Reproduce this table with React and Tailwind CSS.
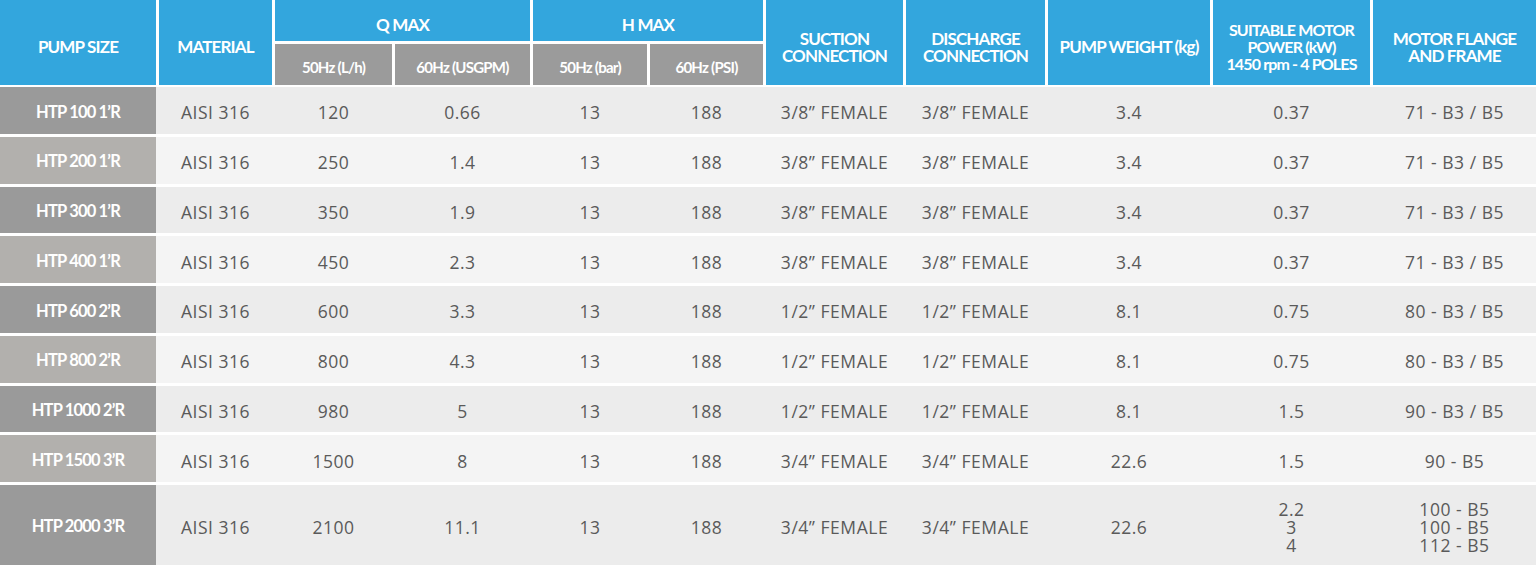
import React from "react";

const cols = "grid grid-cols-[156px_113px_117px_135px_114px_113px_137px_139px_162px_157px_163px] gap-x-[3px]";

const rows = [
  ["HTP 100 1’R", "120", "0.66", "3/8” FEMALE", "3.4", ["0.37"], ["71 - B3 / B5"]],
  ["HTP 200 1’R", "250", "1.4", "3/8” FEMALE", "3.4", ["0.37"], ["71 - B3 / B5"]],
  ["HTP 300 1’R", "350", "1.9", "3/8” FEMALE", "3.4", ["0.37"], ["71 - B3 / B5"]],
  ["HTP 400 1’R", "450", "2.3", "3/8” FEMALE", "3.4", ["0.37"], ["71 - B3 / B5"]],
  ["HTP 600 2’R", "600", "3.3", "1/2” FEMALE", "8.1", ["0.75"], ["80 - B3 / B5"]],
  ["HTP 800 2’R", "800", "4.3", "1/2” FEMALE", "8.1", ["0.75"], ["80 - B3 / B5"]],
  ["HTP 1000 2’R", "980", "5", "1/2” FEMALE", "8.1", ["1.5"], ["90 - B3 / B5"]],
  ["HTP 1500 3’R", "1500", "8", "3/4” FEMALE", "22.6", ["1.5"], ["90 - B5"]],
  ["HTP 2000 3’R", "2100", "11.1", "3/4” FEMALE", "22.6", ["2.2", "3", "4"], ["100 - B5", "100 - B5", "112 - B5"]],
];

const Head = ({ children, className = "" }) => (
  <div className={`bg-[#33a6dd] text-white flex items-center justify-center text-center pt-[8px] leading-[17px] ${className}`}>
    {children}
  </div>
);

const Sub = ({ children }) => (
  <div className="bg-[#9b9b9b] text-white flex items-center justify-center pt-[5px] text-[15px] tracking-[-0.05em]">
    {children}
  </div>
);

const Cell = ({ children }) => (
  <div className="flex flex-col items-center justify-center text-center pt-[4px] leading-[18px]">{children}</div>
);

export default function App() {
  return (
    <div className="w-[1536px] h-[568px] bg-white overflow-hidden">
      <div
        className={`${cols} grid-rows-[41px_41px] gap-y-[3px] text-[17px] font-bold tracking-[-0.05em]`}
        style={{ fontFamily: "Lato, 'Open Sans', sans-serif" }}
      >
        <Head className="row-span-2">PUMP SIZE</Head>
        <Head className="row-span-2">MATERIAL</Head>
        <Head className="col-span-2">Q MAX</Head>
        <Head className="col-span-2">H MAX</Head>
        <Head className="row-span-2">SUCTION<br />CONNECTION</Head>
        <Head className="row-span-2">DISCHARGE<br />CONNECTION</Head>
        <Head className="row-span-2">PUMP WEIGHT (kg)</Head>
        <Head className="row-span-2 leading-[15px] text-[16px]">SUITABLE MOTOR<br />POWER (kW)<br />1450 rpm - 4 POLES</Head>
        <Head className="row-span-2">MOTOR FLANGE<br />AND FRAME</Head>
        <Sub>50Hz (L/h)</Sub>
        <Sub>60Hz (USGPM)</Sub>
        <Sub>50Hz (bar)</Sub>
        <Sub>60Hz (PSI)</Sub>
      </div>

      <div className="mt-[2px] flex flex-col gap-[3px]">
        {rows.map((r, i) => {
          const odd = i % 2 === 0;
          const last = i === rows.length - 1;
          return (
            <div
              key={r[0]}
              className={`${cols} ${last ? "h-[80px]" : "h-[46.75px]"} ${odd ? "bg-[#ececec]" : "bg-[#f4f4f4]"} text-[#5a5a5a] text-[17.5px] tracking-[0.03em]`}
              style={{ fontFamily: "'Open Sans', sans-serif" }}
            >
              <div
                className={`${odd ? "bg-[#9a9a9a]" : "bg-[#b2b0ad]"} text-white font-bold text-[16.5px] tracking-[-0.05em] flex items-center justify-center pt-[3px]`}
                style={{ fontFamily: "Lato, sans-serif" }}
              >
                {r[0]}
              </div>
              <Cell>AISI 316</Cell>
              <Cell>{r[1]}</Cell>
              <Cell>{r[2]}</Cell>
              <Cell>13</Cell>
              <Cell>188</Cell>
              <Cell>{r[3]}</Cell>
              <Cell>{r[3]}</Cell>
              <Cell>{r[4]}</Cell>
              <Cell>{r[5].map((v, k) => <span key={k}>{v}</span>)}</Cell>
              <Cell>{r[6].map((v, k) => <span key={k}>{v}</span>)}</Cell>
            </div>
          );
        })}
      </div>
    </div>
  );
}
